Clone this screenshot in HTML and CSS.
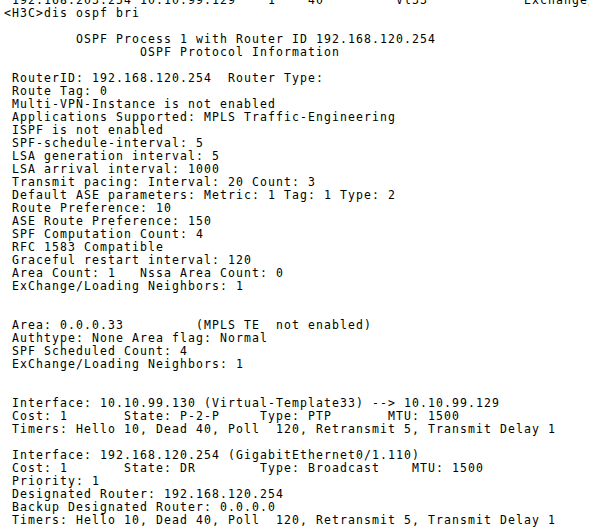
FILE: index.html
```html
<!DOCTYPE html>
<html>
<head>
<meta charset="utf-8">
<link rel="stylesheet" href="styles.css">
</head>
<body>
<pre class="term"> 192.168.203.254 10.10.99.129    1    40         Vl33            Exchange/
&lt;H3C&gt;dis ospf bri

         OSPF Process 1 with Router ID 192.168.120.254
                 OSPF Protocol Information

 RouterID: 192.168.120.254  Router Type:
 Route Tag: 0
 Multi-VPN-Instance is not enabled
 Applications Supported: MPLS Traffic-Engineering
 ISPF is not enabled
 SPF-schedule-interval: 5
 LSA generation interval: 5
 LSA arrival interval: 1000
 Transmit pacing: Interval: 20 Count: 3
 Default ASE parameters: Metric: 1 Tag: 1 Type: 2
 Route Preference: 10
 ASE Route Preference: 150
 SPF Computation Count: 4
 RFC 1583 Compatible
 Graceful restart interval: 120
 Area Count: 1   Nssa Area Count: 0
 ExChange/Loading Neighbors: 1


 Area: 0.0.0.33         (MPLS TE  not enabled)
 Authtype: None Area flag: Normal
 SPF Scheduled Count: 4
 ExChange/Loading Neighbors: 1


 Interface: 10.10.99.130 (Virtual-Template33) --&gt; 10.10.99.129
 Cost: 1       State: P-2-P     Type: PTP       MTU: 1500
 Timers: Hello 10, Dead 40, Poll  120, Retransmit 5, Transmit Delay 1

 Interface: 192.168.120.254 (GigabitEthernet0/1.110)
 Cost: 1       State: DR        Type: Broadcast    MTU: 1500
 Priority: 1
 Designated Router: 192.168.120.254
 Backup Designated Router: 0.0.0.0
 Timers: Hello 10, Dead 40, Poll  120, Retransmit 5, Transmit Delay 1
</pre>
</body>
</html>
```

FILE: styles.css
```css
html, body {
  margin: 0;
  padding: 0;
  background: #ffffff;
  overflow: hidden;
}

.term {
  margin: -6px 0 0 0;
  padding: 0 0 0 4px;
  font-family: "DejaVu Sans Mono", monospace;
  font-size: 11.5px;
  letter-spacing: 1.077px;
  line-height: 13px;
  color: #000000;
  white-space: pre;
}
```
